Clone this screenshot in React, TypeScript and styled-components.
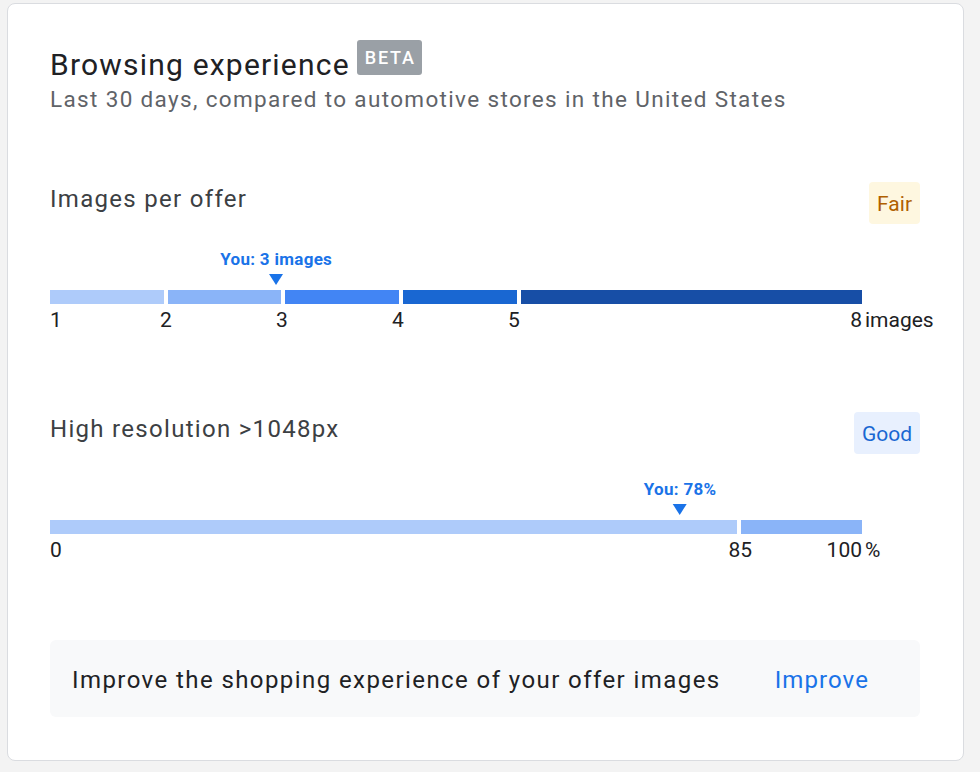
import React from 'react';
import styled, { createGlobalStyle } from 'styled-components';

const GlobalStyle = createGlobalStyle`
  html, body {
    margin: 0;
    padding: 0;
    background: #f3f3f3;
    font-family: Roboto, "Noto Sans", Arial, sans-serif;
    -webkit-font-smoothing: antialiased;
  }
`;

type Segment = { to: number; color: string };

type ScaleData = {
  title: string;
  rating: 'fair' | 'good';
  ratingLabel: string;
  min: number;
  max: number;
  segments: Segment[];
  ticks: number[];
  unit: string;
  unitGap: number;
  you: number;
  youLabel: string;
};

const metrics: ScaleData[] = [
  {
    title: 'Images per offer',
    rating: 'fair',
    ratingLabel: 'Fair',
    min: 1,
    max: 8,
    segments: [
      { to: 2, color: '#aecbfa' },
      { to: 3, color: '#8ab4f8' },
      { to: 4, color: '#4285f4' },
      { to: 5, color: '#1967d2' },
      { to: 8, color: '#174ea6' },
    ],
    ticks: [1, 2, 3, 4, 5, 8],
    unit: 'images',
    unitGap: 3,
    you: 2.95,
    youLabel: 'You: 3 images',
  },
  {
    title: 'High resolution >1048px',
    rating: 'good',
    ratingLabel: 'Good',
    min: 0,
    max: 100,
    segments: [
      { to: 85, color: '#aecbfa' },
      { to: 100, color: '#8ab4f8' },
    ],
    ticks: [0, 85, 100],
    unit: '%',
    unitGap: 3,
    you: 77.6,
    youLabel: 'You: 78%',
  },
];

export default function App() {
  return (
    <>
      <GlobalStyle />
      <Page>
        <Card>
          <Header>
            <TitleRow>
              <Title>Browsing experience</Title>
              <Beta>BETA</Beta>
            </TitleRow>
            <Subtitle>Last 30 days, compared to automotive stores in the United States</Subtitle>
          </Header>

          {metrics.map((m) => (
            <Metric key={m.title}>
              <MetricHead>
                <MetricTitle>{m.title}</MetricTitle>
                <Rating $kind={m.rating}>{m.ratingLabel}</Rating>
              </MetricHead>
              <Scale data={m} />
            </Metric>
          ))}

          <Callout>
            <CalloutText>Improve the shopping experience of your offer images</CalloutText>
            <ImproveLink href="#">Improve</ImproveLink>
          </Callout>
        </Card>
      </Page>
    </>
  );
}

function Scale({ data }: { data: ScaleData }) {
  const span = data.max - data.min;
  const pct = (v: number) => ((v - data.min) / span) * 100;
  let prev = data.min;

  return (
    <Track>
      <Marker style={{ left: `${pct(data.you)}%` }}>
        <MarkerLabel>{data.youLabel}</MarkerLabel>
        <Pointer />
      </Marker>
      <Bar>
        {data.segments.map((s) => {
          const w = s.to - prev;
          prev = s.to;
          return <BarSegment key={s.to} style={{ flexGrow: w }} $color={s.color} />;
        })}
      </Bar>
      <Ticks>
        {data.ticks.map((t, i) => (
          <Tick
            key={t}
            $align={i === 0 ? 'start' : i === data.ticks.length - 1 ? 'end' : 'center'}
            style={{ left: `${pct(t)}%` }}
          >
            {t}
          </Tick>
        ))}
        <Unit style={{ marginLeft: data.unitGap }}>{data.unit}</Unit>
      </Ticks>
    </Track>
  );
}

const Page = styled.div`
  padding: 3px 16px 12px 7px;
`;

const Card = styled.div`
  background: #fff;
  border: 1px solid #dadce0;
  border-radius: 8px;
  padding: 43px 43px 0 42px;
  box-sizing: border-box;
  width: 957px;
  height: 758px;
`;

const Header = styled.div`
  display: flex;
  flex-direction: column;
  gap: 2px;
`;

const TitleRow = styled.div`
  display: flex;
  align-items: flex-start;
  gap: 7px;
`;

const Title = styled.h1`
  margin: 0;
  font-size: 30px;
  font-weight: 400;
  color: #202124;
  line-height: 36px;
  letter-spacing: 1.2px;
`;

const Beta = styled.span`
  background: #9aa0a6;
  color: #fff;
  font-size: 18px;
  font-weight: 500;
  letter-spacing: 1.8px;
  padding: 5px 6px 5px 8px;
  border-radius: 3px;
  line-height: 25px;
  margin-top: -7px;
`;

const Subtitle = styled.p`
  margin: 0;
  font-size: 22.5px;
  line-height: 28px;
  color: #5f6368;
  letter-spacing: 1.35px;
`;

const Metric = styled.section`
  margin-top: 69px;
  & + & {
    margin-top: 80px;
  }
`;

const MetricHead = styled.div`
  display: flex;
  justify-content: space-between;
  align-items: flex-start;
`;

const MetricTitle = styled.h2`
  margin: 1.5px 0 0;
  font-size: 24px;
  line-height: 30px;
  font-weight: 400;
  color: #3c4043;
  letter-spacing: 1.3px;
`;

const Rating = styled.span<{ $kind: 'fair' | 'good' }>`
  font-size: 21px;
  line-height: 40px;
  padding: 2px 8px 0;
  border-radius: 4px;
  background: ${(p) => (p.$kind === 'fair' ? '#fef7e0' : '#e8f0fe')};
  color: ${(p) => (p.$kind === 'fair' ? '#b06000' : '#1967d2')};
`;

const Track = styled.div`
  position: relative;
  width: 812px;
  margin-top: 66px;
`;

const Marker = styled.div`
  position: absolute;
  bottom: 100%;
  transform: translateX(-50%);
  display: flex;
  flex-direction: column;
  align-items: center;
  padding-bottom: 5px;
`;

const MarkerLabel = styled.span`
  font-size: 17px;
  font-weight: 700;
  color: #1a73e8;
  white-space: nowrap;
  line-height: 20px;
  letter-spacing: 0.3px;
  margin-bottom: 5px;
`;

const Pointer = styled.span`
  width: 0;
  height: 0;
  border-left: 7px solid transparent;
  border-right: 7px solid transparent;
  border-top: 11px solid #1a73e8;
`;

const Bar = styled.div`
  display: flex;
  gap: 4px;
  height: 14px;
`;

const BarSegment = styled.div<{ $color: string }>`
  flex-basis: 0;
  background: ${(p) => p.$color};
`;

const Ticks = styled.div`
  position: relative;
  margin-top: 4px;
  height: 24px;
  font-size: 21px;
  line-height: 24px;
  color: #202124;
`;

const Tick = styled.span<{ $align: 'start' | 'center' | 'end' }>`
  position: absolute;
  top: 0;
  transform: ${(p) =>
    p.$align === 'start' ? 'none' : p.$align === 'end' ? 'translateX(-100%)' : 'translateX(-50%)'};
`;

const Unit = styled.span`
  position: absolute;
  left: 100%;
  top: 0;
  white-space: nowrap;
`;

const Callout = styled.div`
  margin-top: 78px;
  background: #f8f9fa;
  border-radius: 6px;
  height: 77px;
  box-sizing: border-box;
  display: flex;
  align-items: center;
  justify-content: space-between;
  padding: 3px 51px 0 22px;
`;

const CalloutText = styled.span`
  font-size: 24px;
  color: #202124;
  letter-spacing: 1.42px;
`;

const ImproveLink = styled.a`
  font-size: 24px;
  color: #1a73e8;
  text-decoration: none;
  letter-spacing: 1.1px;
`;
